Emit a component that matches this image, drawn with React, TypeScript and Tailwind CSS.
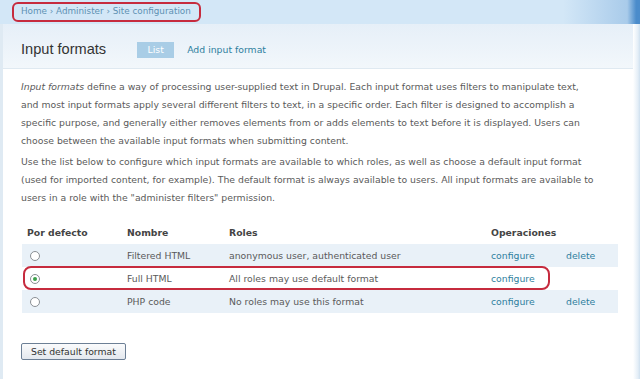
import React from "react";

const body = "font-['DejaVu_Sans',Verdana,sans-serif]";

function Radio({ checked }: { checked?: boolean }) {
  return (
    <span className="inline-flex h-[10px] w-[10px] items-center justify-center rounded-full border border-[#8a8f94] bg-white">
      {checked && <span className="h-[4px] w-[4px] rounded-full bg-[#3aa04a]" />}
    </span>
  );
}

const rows = [
  { name: "Filtered HTML", roles: "anonymous user, authenticated user", del: true, checked: false, bg: "bg-[#e9f1f8]" },
  { name: "Full HTML", roles: "All roles may use default format", del: false, checked: true, bg: "bg-white" },
  { name: "PHP code", roles: "No roles may use this format", del: true, checked: false, bg: "bg-[#e9f1f8]" },
];

export default function App() {
  return (
    <div className={`flex h-[379px] w-[640px] flex-col overflow-hidden bg-white ${body}`}>
      {/* top bar */}
      <div className="flex h-[24px] shrink-0 items-center bg-[linear-gradient(90deg,#d3e7f7_0%,#d3e7f7_88%,#a9cbea_98%,#4b8ccb_99.4%,#4b8ccb_100%)] pl-[12px]">
        <div className="flex h-[20px] w-[189px] items-center rounded-[6px] border-2 border-[#c62b3e] pl-[7px] text-[8.8px] text-[#5d91b3]">
          Home › Administer › Site configuration
        </div>
      </div>
      <div className="flex min-h-0 flex-1">
        <div className="w-[3px] shrink-0 bg-[#dfeaf3]" />
        <div className="flex min-w-0 flex-1 flex-col">
          {/* title */}
          <div className="flex h-[45px] shrink-0 items-center border-b border-[#dfe9f1] bg-[linear-gradient(180deg,#e6eff8,#f2f7fb)] pl-[18px] pt-[7px]">
            <h1 className="font-['Liberation_Sans',Arial,sans-serif] text-[14.6px] text-[#333]">Input formats</h1>
            <span className="ml-[31px] flex h-[16px] w-[37px] items-center justify-center bg-[#a9cde6] text-[9.3px] text-white">
              List
            </span>
            <span className="ml-[13px] text-[9.3px] text-[#2f7f9e]">Add input format</span>
          </div>
          {/* body */}
          <div className="relative flex-1 pl-[18px] pr-[10px] pt-[9px] text-[9.3px] leading-[18px] text-[#5a5a5a]">
            <p className="whitespace-nowrap">
              <em>Input formats</em> define a way of processing user-supplied text in Drupal. Each input format uses filters to manipulate text,
              <br />
              and most input formats apply several different filters to text, in a specific order. Each filter is designed to accomplish a
              <br />
              specific purpose, and generally either removes elements from or adds elements to text before it is displayed. Users can
              <br />
              choose between the available input formats when submitting content.
            </p>
            <p className="mt-[3px] whitespace-nowrap">
              Use the list below to configure which input formats are available to which roles, as well as choose a default input format
              <br />
              (used for imported content, for example). The default format is always available to users. All input formats are available to
              <br />
              users in a role with the "administer filters" permission.
            </p>

            <div className="relative ml-[1px] mt-[15px] w-[596px]">
              <div className="flex h-[22px] items-center font-bold text-[#444]">
                <div className="w-[105px] pl-[5px]">Por defecto</div>
                <div className="w-[102px]">Nombre</div>
                <div className="w-[262px]">Roles</div>
                <div>Operaciones</div>
              </div>
              {rows.map((r) => (
                <div key={r.name} className={`flex h-[23px] items-center ${r.bg}`}>
                  <div className="flex w-[105px] pl-[8px]">
                    <Radio checked={r.checked} />
                  </div>
                  <div className="w-[102px]">{r.name}</div>
                  <div className="w-[262px]">{r.roles}</div>
                  <div className="w-[75px] text-[#2f7f9e]">configure</div>
                  <div className="text-[#2f7f9e]">{r.del ? "delete" : ""}</div>
                </div>
              ))}
              <div className="pointer-events-none absolute left-[1px] top-[44px] h-[24px] w-[527px] rounded-[8px] border-2 border-[#c62b3e]" />
            </div>

            <button className="mt-[30px] flex h-[17px] items-center rounded-[2px] border border-[#6c7f95] bg-[linear-gradient(180deg,#fafbfc,#e4e8ee)] px-[9px] text-[9.3px] font-normal text-[#333]">
              Set default format
            </button>
          </div>
        </div>
        <div className="w-[7px] shrink-0 bg-[linear-gradient(90deg,#ffffff,#e4eef7_70%,#cfe0ef)]" />
      </div>
    </div>
  );
}
